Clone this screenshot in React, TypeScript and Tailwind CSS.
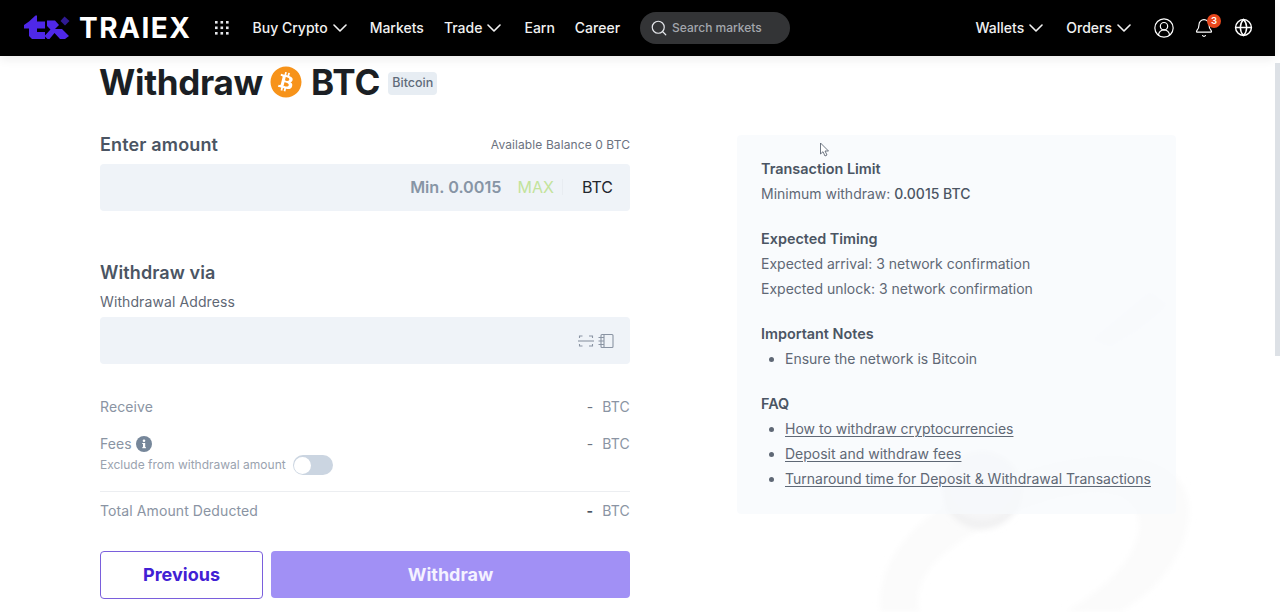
import React from "react";
import { Search, CircleUserRound, Bell, Globe } from "lucide-react";
import { FaBitcoin } from "react-icons/fa";

function Logo() {
  return (
    <svg width="46" height="26" viewBox="0 0 46 26" className="shrink-0">
      <path d="M5 6.5 L11.5 0.5 H13 V6.5 H21 V13.5 H13 V17 H21 V24 H8 L5 21 V13.5 H0 V10 Z" fill="#4f28e8" />
      <path d="M23 5.5 H31 L35 10 L31 14 L38 14 L45 21 L41 24 H36 L30.5 18 L25.5 24 H23.5 L20.5 21 L26.5 14.5 L23 11 Z" fill="#4f28e8" />
      <path d="M40.5 1.5 L45.5 6 L41 10.5 L36.5 6 Z" fill="#2f1a93" />
    </svg>
  );
}

function GridDots() {
  const c = [0, 5.5, 11];
  return (
    <svg width="14" height="14" viewBox="0 0 14 14" className="shrink-0">
      {c.map((x) => c.map((y) => <rect key={`${x}-${y}`} x={x} y={y} width="2.6" height="2.6" fill="#e5e7eb" />))}
    </svg>
  );
}

function Caret() {
  return (
    <svg width="14" height="8" viewBox="0 0 14 8" fill="none" stroke="#f1f1f1" strokeWidth="1.6" strokeLinecap="round" strokeLinejoin="round" className="mt-[1px] mr-[3px] shrink-0">
      <path d="M1 1 L7 7 L13 1" />
    </svg>
  );
}

function NavItem({ label, caret }: { label: string; caret?: boolean }) {
  return (
    <span className="flex items-center gap-[5px] mb-[2px] text-[14px] font-medium text-[#f1f1f1]">
      {label}
      {caret && <Caret />}
    </span>
  );
}

function Row({ label, dark }: { label: React.ReactNode; dark?: boolean }) {
  return (
    <div className="flex justify-between items-center text-[14px] tracking-[0.1px] text-[#8a94a3] leading-[20px]">
      <div className="flex items-center gap-[4px]">{label}</div>
      <div className="flex items-center gap-[9px]">
        <span className={dark ? "text-[#4b5563] font-bold" : "text-[#6b7280]"}>-</span>
        <span className="tracking-[0.2px]">BTC</span>
      </div>
    </div>
  );
}

function Watermark() {
  return (
    <svg className="absolute left-[840px] top-[270px] pointer-events-none" width="435" height="342" viewBox="0 0 435 342">
      <defs>
        <filter id="soft"><feGaussianBlur stdDeviation="3" /></filter>
      </defs>
      <g filter="url(#soft)">
        <path d="M40 342 C35 270 110 215 215 192 C290 175 340 190 348 230 C355 275 320 320 280 342 L225 342 C280 310 310 270 295 240 C275 205 190 230 130 265 C90 290 72 315 80 342 Z" fill="#fbfbfb" />
        <path d="M310 20 L330 35 L300 60 L270 78 L250 70 Z" fill="#fbfbfc" />
      </g>
      <ellipse cx="142" cy="222" rx="38" ry="37" fill="#f0f0f1" filter="url(#soft)" />
      <ellipse cx="142" cy="216" rx="37" ry="35" fill="#f6f6f7" filter="url(#soft)" />
    </svg>
  );
}

function Panel() {
  const h = "text-[14.4px] font-semibold text-[#4b5563] leading-[20px]";
  const p = "text-[14px] text-[#5f6875] leading-[20px] whitespace-nowrap";
  const a = "underline underline-offset-[2px] decoration-1";
  return (
    <div className="relative w-[439px] h-[379px] mt-[79px] ml-[107px] shrink-0 rounded-[4px] bg-[#f6f9fc]/70 pt-[24px] pl-[24px] pr-[20px]">
      <div className={h}>Transaction Limit</div>
      <div className={`${p} mt-[5px]`}>Minimum withdraw: <span className="font-medium text-[#4b5563]">0.0015 BTC</span></div>
      <div className={`${h} mt-[25px]`}>Expected Timing</div>
      <div className={`${p} mt-[5px]`}>Expected arrival: 3 network confirmation</div>
      <div className={`${p} mt-[5px]`}>Expected unlock: 3 network confirmation</div>
      <div className={`${h} mt-[25px]`}>Important Notes</div>
      <ul className={`${p} list-disc pl-[24px] mt-[5px]`}>
        <li>Ensure the network is Bitcoin</li>
      </ul>
      <div className={`${h} mt-[25px]`}>FAQ</div>
      <ul className={`${p} list-disc pl-[24px] mt-[5px] flex flex-col gap-[5px]`}>
        <li><span className={a}>How to withdraw cryptocurrencies</span></li>
        <li><span className={a}>Deposit and withdraw fees</span></li>
        <li><span className={a}>Turnaround time for Deposit &amp; Withdrawal Transactions</span></li>
      </ul>
      <svg className="absolute left-[82px] top-[7px]" width="12" height="16" viewBox="0 0 12 16" fill="#fff" stroke="#5f6875" strokeWidth="0.9">
        <path d="M1.5 1 V12 L4 9.7 L6 14 L8 13 L6 9 H9.5 Z" />
      </svg>
    </div>
  );
}

function ScanIcon() {
  return (
    <svg width="36" height="16" viewBox="0 0 36 16" fill="none" stroke="#8a94a3" strokeWidth="1.1">
      <path d="M1.5 5 V3 H4.5 M11 3 H14.5 V5 M1.5 11 V13 H4.5 M11 13 H14.5 V11" />
      <path d="M0 8 H16" />
      <rect x="23" y="1.5" width="12" height="13" rx="1" />
      <path d="M26 1.5 V14.5 M20.5 4.5 H26 M20.5 8 H26 M20.5 11.5 H26" />
    </svg>
  );
}

export default function App() {
  return (
    <div className="relative w-[1280px] h-[612px] overflow-hidden bg-white font-['Inter','Liberation_Sans',sans-serif]">
      <Watermark />
      <header className="relative flex items-center w-[1275px] h-[56px] bg-black shadow-[0_3px_10px_rgba(0,0,0,0.08)] pl-[24px] pr-[22px]">
        <Logo />
        <span className="ml-[9px] text-[28px] font-bold tracking-[1.5px] text-white leading-none">TRAIEX</span>
        <div className="ml-[23px]"><GridDots /></div>
        <div className="ml-[24px] flex items-center gap-[20px]">
          <NavItem label="Buy Crypto" caret />
          <NavItem label="Markets" />
          <NavItem label="Trade" caret />
          <NavItem label="Earn" />
          <NavItem label="Career" />
        </div>
        <div className="ml-[20px] flex items-center gap-[4px] w-[150px] h-[32px] rounded-full bg-[#333436] pl-[10px]">
          <Search size={18} strokeWidth={1.6} className="text-[#e5e7eb]" />
          <span className="text-[12px] font-medium text-[#a3a7ad]">Search markets</span>
        </div>
        <div className="ml-auto flex items-center gap-[20px]">
          <NavItem label="Wallets" caret />
          <NavItem label="Orders" caret />
          <CircleUserRound size={22} strokeWidth={1.3} className="text-white ml-[-1px]" />
          <div className="relative ml-[-1px]">
            <Bell size={20} strokeWidth={1.4} className="text-white" />
            <span className="absolute left-[13px] top-[-4px] w-[14px] h-[14px] rounded-full bg-[#e8471c] text-white text-[9.5px] font-semibold flex items-center justify-center">3</span>
          </div>
          <Globe size={19} strokeWidth={1.8} className="text-white mb-[2px]" />
        </div>
      </header>

      <main className="relative flex pl-[100px]">
        <div className="w-[530px] shrink-0">
          <div className="flex items-center h-[52px]">
            <span className="ml-[-1px] text-[35px] font-bold text-[#1b1f24] leading-none tracking-[-0.3px]">Withdraw</span>
            <span className="relative ml-[7px] w-[32px] h-[32px] flex items-center justify-center">
              <span className="absolute inset-[4px] bg-white rounded-full" />
              <FaBitcoin size={32} className="relative text-[#f7931a]" />
            </span>
            <span className="ml-[9px] text-[35px] font-bold text-[#1b1f24] leading-none">BTC</span>
            <span className="ml-[8px] mt-[3px] h-[23px] px-[4px] rounded-[4px] bg-[#e7edf3] text-[12.5px] font-medium text-[#5f6b7a] flex items-center">Bitcoin</span>
          </div>

          <div className="flex justify-between items-center mt-[24px] h-[24px]">
            <span className="text-[18px] tracking-[0.15px] font-semibold text-[#4b5563]">Enter amount</span>
            <span className="mt-[2px] text-[12px] tracking-[0.1px] text-[#6b7280]">Available Balance 0 BTC</span>
          </div>
          <div className="flex items-center justify-end mt-[8px] h-[47px] rounded-[4px] bg-[#eff3f8] pr-[17px] pb-[1px]">
            <span className="text-[16.2px] font-semibold text-[#8795a5]">Min. 0.0015</span>
            <span className="ml-[16px] text-[16px] text-[#c3e39b]">MAX</span>
            <span className="ml-[8px] w-px h-[16px] bg-[#e8ecf1]" />
            <span className="ml-[19px] text-[16px] text-[#23272e]">BTC</span>
          </div>

          <div className="mt-[49px] h-[24px] flex items-center text-[18px] tracking-[0.1px] font-semibold text-[#4b5563]">Withdraw via</div>
          <div className="mt-[7px] h-[20px] flex items-center text-[14px] font-normal tracking-[0.1px] text-[#5f6875]">Withdrawal Address</div>
          <div className="flex items-center justify-end mt-[6px] h-[47px] rounded-[4px] bg-[#eff3f8] pr-[16px]">
            <ScanIcon />
          </div>

          <div className="mt-[33px]"><Row label="Receive" /></div>
          <div className="mt-[17px]">
            <Row label={<>Fees <svg width="16" height="16" viewBox="0 0 16 16"><circle cx="8" cy="8" r="8" fill="#76879a" /><rect x="7" y="7" width="2.2" height="5" fill="#fff" /><rect x="6.2" y="7" width="2" height="1" fill="#fff" /><rect x="6.2" y="11.2" width="3.8" height="1" fill="#fff" /><circle cx="8" cy="4.7" r="1.3" fill="#fff" /></svg></>} />
            <div className="flex items-center gap-[7px] mt-[1px] h-[20px]">
              <span className="text-[12px] text-[#9aa3af]">Exclude from withdrawal amount</span>
              <span className="flex items-center w-[40px] h-[20px] rounded-full bg-[#cbd5e1] pl-[1px]">
                <span className="w-[17px] h-[17px] rounded-full bg-white" />
              </span>
            </div>
          </div>
          <div className="mt-[16px] h-px bg-[#eceef1]" />
          <div className="mt-[9px]"><Row label="Total Amount Deducted" dark /></div>
          <div className="flex gap-[8px] mt-[30px]">
            <button className="w-[163px] h-[48px] rounded-[4px] border border-[#7a5fdc] bg-white pb-[2px] text-[18px] font-bold text-[#4120d4]">Previous</button>
            <button className="flex-1 h-[47px] rounded-[4px] bg-[#a190f5] text-[18px] font-bold text-[#f4f2ff]">Withdraw</button>
          </div>
        </div>
        <Panel />
      </main>

      <div className="absolute right-0 top-[63px] w-[5px] h-[293px] bg-[#dde1e6]" />
    </div>
  );
}
